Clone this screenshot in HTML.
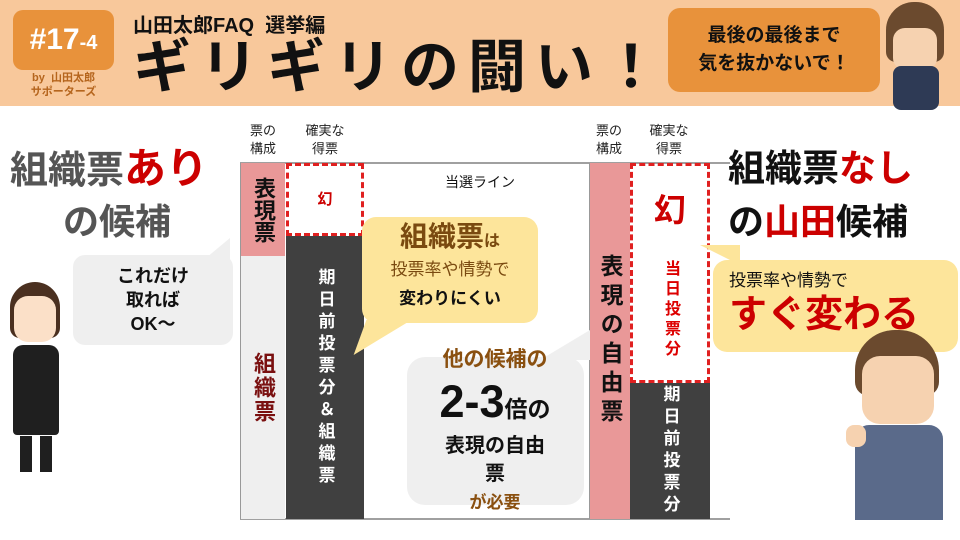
<!DOCTYPE html>
<html><head><meta charset="utf-8"><style>
*{margin:0;padding:0;box-sizing:border-box}
body{width:960px;height:540px;overflow:hidden;background:#fff;font-family:"Liberation Sans","Noto Sans CJK JP",sans-serif;position:relative;font-weight:bold}
.a{position:absolute}
.v{writing-mode:vertical-rl;text-orientation:upright;display:flex;align-items:center;justify-content:center}
.c{text-align:center}
</style></head><body>
<div class="a" style="left:0;top:0;width:960px;height:106px;background:#f8c89b"></div>
<div class="a c" style="left:13px;top:10px;width:101px;height:60px;background:#e8923b;border-radius:10px;color:#fff;font-size:30px;line-height:60px">#17<span style="font-size:20px">-4</span></div>
<div class="a c" style="left:13px;top:71px;width:101px;color:#b5651d;font-size:11px;line-height:14px">by&nbsp; 山田太郎<br>サポーターズ</div>
<div class="a" style="left:133px;top:9px;font-size:20px;color:#111">山田太郎FAQ&nbsp; 選挙編</div>
<div class="a" style="left:133px;top:34px;font-size:58px;letter-spacing:9px;color:#111;line-height:68px">ギリギリの闘い！</div>
<div class="a c" style="left:668px;top:8px;width:212px;height:84px;background:#e8923b;border-radius:12px;color:#111;font-size:19px;line-height:28px;padding-top:14px">最後の最後まで<br>気を抜かないで！</div>
<div class="a" style="left:886px;top:2px;width:58px;height:60px;background:#6b4a2e;border-radius:28px 28px 10px 10px"></div>
<div class="a" style="left:893px;top:28px;width:44px;height:42px;background:#f6d2b0;border-radius:12px"></div>
<div class="a" style="left:893px;top:66px;width:46px;height:44px;background:#2e3a55;border-radius:8px"></div>

<div class="a" style="left:240px;top:162px;width:490px;height:2px;background:#a0a0a0"></div>
<div class="a" style="left:240px;top:518px;width:490px;height:2px;background:#a0a0a0"></div>
<div class="a" style="left:240px;top:163px;width:1px;height:356px;background:#999"></div>

<div class="a c" style="left:244px;top:122px;width:38px;font-size:13px;line-height:18px;font-weight:normal;color:#222">票の<br>構成</div>
<div class="a c" style="left:296px;top:122px;width:58px;font-size:13px;line-height:18px;font-weight:normal;color:#222">確実な<br>得票</div>
<div class="a c" style="left:590px;top:122px;width:38px;font-size:13px;line-height:18px;font-weight:normal;color:#222">票の<br>構成</div>
<div class="a c" style="left:640px;top:122px;width:58px;font-size:13px;line-height:18px;font-weight:normal;color:#222">確実な<br>得票</div>

<div class="a v" style="left:241px;top:163px;width:44px;height:93px;background:#e99898;font-size:22px;color:#111;line-height:1">表現票</div>
<div class="a v" style="left:241px;top:256px;width:44px;height:263px;background:#efefef;font-size:22px;color:#7a1010;letter-spacing:2px">組織票</div>
<div class="a c" style="left:286px;top:163px;width:78px;height:73px;border:3px dashed #e02020;color:#c00;font-size:15px;line-height:67px">幻</div>
<div class="a v" style="left:286px;top:236px;width:78px;height:283px;background:#404040;color:#fff;font-size:17px;letter-spacing:5px">期日前投票分＆組織票</div>
<div class="a" style="left:445px;top:172px;font-size:14px;font-weight:normal;color:#111">当選ライン</div>

<div class="a v" style="left:589px;top:163px;width:41px;height:356px;background:#e99898;font-size:23px;color:#111;border-left:1px solid #999;letter-spacing:6px">表現の自由票</div>
<div class="a" style="left:630px;top:163px;width:80px;height:220px;border:3px dashed #e02020"></div>
<div class="a c" style="left:630px;top:185px;width:80px;color:#c00;font-size:32px">幻</div>
<div class="a v" style="left:630px;top:250px;width:80px;height:120px;color:#d00;font-size:16px;letter-spacing:4px">当日投票分</div>
<div class="a v" style="left:630px;top:383px;width:80px;height:136px;background:#404040;color:#fff;font-size:17px;letter-spacing:5px">期日前投票分</div>

<div class="a" style="left:10px;top:143px;font-size:38px;color:#555;line-height:52px"><span>組織票</span><span style="color:#c00;font-size:42px">あり</span></div>
<div class="a" style="left:63px;top:197px;font-size:36px;color:#555;line-height:50px">の候補</div>
<div class="a c" style="left:73px;top:255px;width:160px;height:90px;background:#efefef;border-radius:12px;font-size:18px;line-height:24px;padding-top:9px;color:#111">これだけ<br>取れば<br>OK～</div>
<div class="a" style="left:200px;top:238px;width:0;height:0;border-left:30px solid transparent;border-bottom:25px solid #efefef"></div>
<div class="a" style="left:10px;top:282px;width:50px;height:56px;background:#4a3020;border-radius:25px 25px 10px 10px"></div>
<div class="a" style="left:14px;top:296px;width:42px;height:46px;background:#fbe0c8;border-radius:14px"></div>
<div class="a" style="left:13px;top:345px;width:46px;height:90px;background:#1f1f1f;border-radius:10px 10px 4px 4px"></div>
<div class="a" style="left:20px;top:436px;width:12px;height:36px;background:#1f1f1f"></div>
<div class="a" style="left:40px;top:436px;width:12px;height:36px;background:#1f1f1f"></div>

<div class="a c" style="left:362px;top:217px;width:176px;height:106px;background:#fde59b;border-radius:14px;color:#111;line-height:28px;padding-top:6px">
<span style="font-size:28px;color:#7a4a10">組織票</span><span style="font-size:16px;color:#7a4a10">は</span><br>
<span style="font-size:17px;font-weight:normal;color:#7a4a10">投票率や情勢で</span><br><span style="font-size:17px">変わりにくい</span></div>
<div class="a" style="left:360px;top:320px;width:0;height:0;border-top:35px solid #fde59b;border-right:45px solid transparent;transform:skewX(-20deg)"></div>

<div class="a c" style="left:407px;top:357px;width:177px;height:148px;background:#efefef;border-radius:18px"></div>
<div class="a" style="left:540px;top:330px;width:0;height:0;border-bottom:30px solid #efefef;border-left:50px solid transparent"></div>
<div class="a c" style="left:400px;top:343px;width:190px;color:#8a5010;font-size:21px">他の候補の</div>
<div class="a c" style="left:400px;top:374px;width:190px;color:#111;font-size:45px;line-height:56px">2-3<span style="font-size:23px">倍の</span></div>
<div class="a c" style="left:400px;top:432px;width:190px;color:#111;font-size:20px;line-height:28px">表現の自由<br>票</div>
<div class="a c" style="left:400px;top:488px;width:190px;color:#8a5010;font-size:17px">が必要</div>

<div class="a" style="left:728px;top:143px;font-size:37px;color:#111;line-height:52px">組織票<span style="color:#c00">なし</span></div>
<div class="a" style="left:728px;top:197px;font-size:36px;color:#111;line-height:50px">の<span style="color:#c00">山田</span>候補</div>
<div class="a" style="left:713px;top:260px;width:245px;height:92px;background:#fde59b;border-radius:14px;padding:6px 0 0 16px">
<div style="font-size:17px;font-weight:normal;color:#111">投票率や情勢で</div>
<div style="font-size:38px;color:#c00;line-height:48px">すぐ変わる</div></div>
<div class="a" style="left:700px;top:245px;width:0;height:0;border-top:20px solid #fde59b;border-left:40px solid transparent"></div>
<div class="a" style="left:855px;top:330px;width:84px;height:66px;background:#6b4a2e;border-radius:40px 40px 14px 14px"></div>
<div class="a" style="left:862px;top:356px;width:72px;height:68px;background:#f6d2b0;border-radius:18px"></div>
<div class="a" style="left:855px;top:425px;width:88px;height:95px;background:#5a6a8a;border-radius:14px 14px 0 0"></div>
<div class="a" style="left:846px;top:425px;width:20px;height:22px;background:#f6d2b0;border-radius:8px"></div>
</body></html>
